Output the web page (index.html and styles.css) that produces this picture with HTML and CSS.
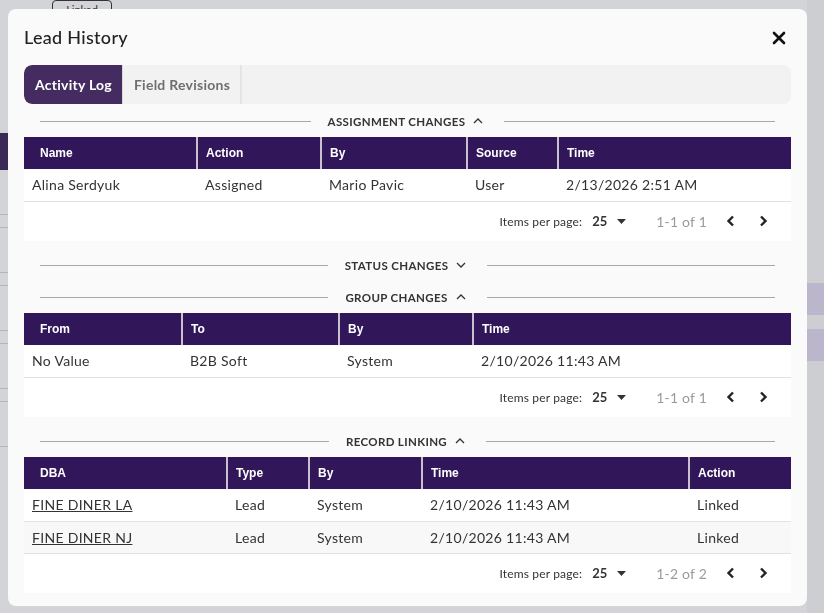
FILE: index.html
```html
<!DOCTYPE html>
<html>
<head>
<meta charset="utf-8">
<link rel="stylesheet" href="styles.css">
</head>
<body>
<div class="page">
  <div class="page-left">
    <div class="bg-linked">Linked</div>
    <div class="bg-purple"></div>
    <div class="bg-line l1"></div>
    <div class="bg-line l2"></div>
    <div class="bg-line l1"></div>
    <div class="bg-line l2"></div>
    <div class="bg-line l1"></div>
    <div class="bg-line l2"></div>
    <div class="bg-line l1"></div>
    <div class="bg-line l2"></div>
    <div class="bg-line l1"></div>
  </div>
  <div class="page-right">
    <div class="bg-lav"></div>
    <div class="bg-lav"></div>
  </div>
</div>

<div class="modal">
  <div class="modal-head">
    <h1 class="title">Lead History</h1>
    <button class="close" aria-label="close">
      <svg width="14" height="14" viewBox="0 0 14 14"><path d="M2 2 L12 12 M12 2 L2 12" stroke="#111" stroke-width="2.6" stroke-linecap="round"/></svg>
    </button>
  </div>

  <div class="tabs">
    <div class="tab active">Activity Log</div>
    <div class="tab">Field Revisions</div>
  </div>

  <div class="section first">
    <div class="sec-head">
      <span class="sec-line"></span>
      <span class="sec-title">Assignment Changes
        <svg class="chev" width="10" height="6" viewBox="0 0 10 6"><path d="M1 5 L5 1 L9 5" fill="none" stroke="#333" stroke-width="1.3"/></svg>
      </span>
      <span class="sec-line"></span>
    </div>
    <div class="card">
      <table class="grid">
        <colgroup><col style="width:173px"><col style="width:124px"><col style="width:146px"><col style="width:91px"><col></colgroup>
        <thead><tr><th>Name</th><th>Action</th><th>By</th><th>Source</th><th>Time</th></tr></thead>
        <tbody>
          <tr><td>Alina Serdyuk</td><td>Assigned</td><td>Mario Pavic</td><td>User</td><td>2/13/2026 2:51 AM</td></tr>
        </tbody>
      </table>
      <div class="pager">
        <span class="ipp">Items per page:</span>
        <span class="sel">25 <svg width="9" height="5" viewBox="0 0 9 5"><path d="M0 0 L9 0 L4.5 5 Z" fill="#333"/></svg></span>
        <span class="range">1-1 of 1</span>
        <span class="nav"><svg width="10" height="12" viewBox="0 0 10 12"><path d="M7 1.5 L2.5 6 L7 10.5" fill="none" stroke="#222" stroke-width="2.4"/></svg></span>
        <span class="nav"><svg width="10" height="12" viewBox="0 0 10 12"><path d="M3 1.5 L7.5 6 L3 10.5" fill="none" stroke="#222" stroke-width="2.4"/></svg></span>
      </div>
    </div>
  </div>

  <div class="section">
    <div class="sec-head">
      <span class="sec-line"></span>
      <span class="sec-title">Status Changes
        <svg class="chev" width="10" height="6" viewBox="0 0 10 6"><path d="M1 1 L5 5 L9 1" fill="none" stroke="#333" stroke-width="1.3"/></svg>
      </span>
      <span class="sec-line"></span>
    </div>
  </div>

  <div class="section">
    <div class="sec-head">
      <span class="sec-line"></span>
      <span class="sec-title">Group Changes
        <svg class="chev" width="10" height="6" viewBox="0 0 10 6"><path d="M1 5 L5 1 L9 5" fill="none" stroke="#333" stroke-width="1.3"/></svg>
      </span>
      <span class="sec-line"></span>
    </div>
    <div class="card">
      <table class="grid">
        <colgroup><col style="width:158px"><col style="width:157px"><col style="width:134px"><col></colgroup>
        <thead><tr><th>From</th><th>To</th><th>By</th><th>Time</th></tr></thead>
        <tbody>
          <tr><td>No Value</td><td>B2B Soft</td><td>System</td><td>2/10/2026 11:43 AM</td></tr>
        </tbody>
      </table>
      <div class="pager">
        <span class="ipp">Items per page:</span>
        <span class="sel">25 <svg width="9" height="5" viewBox="0 0 9 5"><path d="M0 0 L9 0 L4.5 5 Z" fill="#333"/></svg></span>
        <span class="range">1-1 of 1</span>
        <span class="nav"><svg width="10" height="12" viewBox="0 0 10 12"><path d="M7 1.5 L2.5 6 L7 10.5" fill="none" stroke="#222" stroke-width="2.4"/></svg></span>
        <span class="nav"><svg width="10" height="12" viewBox="0 0 10 12"><path d="M3 1.5 L7.5 6 L3 10.5" fill="none" stroke="#222" stroke-width="2.4"/></svg></span>
      </div>
    </div>
  </div>

  <div class="section">
    <div class="sec-head">
      <span class="sec-line"></span>
      <span class="sec-title">Record Linking
        <svg class="chev" width="10" height="6" viewBox="0 0 10 6"><path d="M1 5 L5 1 L9 5" fill="none" stroke="#333" stroke-width="1.3"/></svg>
      </span>
      <span class="sec-line"></span>
    </div>
    <div class="card">
      <table class="grid">
        <colgroup><col style="width:203px"><col style="width:82px"><col style="width:113px"><col style="width:267px"><col></colgroup>
        <thead><tr><th>DBA</th><th>Type</th><th>By</th><th>Time</th><th>Action</th></tr></thead>
        <tbody>
          <tr><td><a class="link" href="#">FINE DINER LA</a></td><td>Lead</td><td>System</td><td>2/10/2026 11:43 AM</td><td>Linked</td></tr>
          <tr class="alt"><td><a class="link" href="#">FINE DINER NJ</a></td><td>Lead</td><td>System</td><td>2/10/2026 11:43 AM</td><td>Linked</td></tr>
        </tbody>
      </table>
      <div class="pager">
        <span class="ipp">Items per page:</span>
        <span class="sel">25 <svg width="9" height="5" viewBox="0 0 9 5"><path d="M0 0 L9 0 L4.5 5 Z" fill="#333"/></svg></span>
        <span class="range">1-2 of 2</span>
        <span class="nav"><svg width="10" height="12" viewBox="0 0 10 12"><path d="M7 1.5 L2.5 6 L7 10.5" fill="none" stroke="#222" stroke-width="2.4"/></svg></span>
        <span class="nav"><svg width="10" height="12" viewBox="0 0 10 12"><path d="M3 1.5 L7.5 6 L3 10.5" fill="none" stroke="#222" stroke-width="2.4"/></svg></span>
      </div>
    </div>
  </div>
</div>
</body>
</html>
```

FILE: styles.css
```css
* { box-sizing: border-box; }
html, body { margin: 0; padding: 0; }
body {
  width: 824px;
  height: 613px;
  overflow: hidden;
  background: #d3d4d8;
  font-family: Lato, "Noto Sans", sans-serif;
  color: #333;
}

/* dimmed underlying page */
.page {
  display: flex;
  justify-content: space-between;
  height: 613px;
}
.page-left {
  width: 60%;
  display: flex;
  flex-direction: column;
  padding-left: 52px;
}
.bg-linked {
  width: 60px;
  height: 18px;
  margin-top: 0;
  border: 1px solid #333;
  border-radius: 4px;
  font-size: 11px;
  color: #333;
  text-align: center;
  line-height: 18px;
}
.bg-purple { height: 37px; background: #3a2a55; margin-left: -52px; margin-top: 115px; }
.bg-line { height: 1px; background: #b4b4ba; margin-left: -52px; }
.bg-line.l1 { margin-top: 44px; }
.bg-line.l2 { margin-top: 12px; }
.page-right {
  width: 17px;
  display: flex;
  flex-direction: column;
  padding-top: 283px;
  gap: 14px;
  background: #cdced2;
}
.bg-lav { height: 32px; background: #bcb6cc; }

/* modal */
.modal {
  position: fixed;
  top: 9px;
  left: 8px;
  width: 799px;
  height: 597px;
  background: #fafafa;
  border-radius: 8px;
  padding: 0 16px;
  overflow: hidden;
}
.modal-head {
  height: 56px;
  display: flex;
  align-items: center;
  justify-content: space-between;
}
.title {
  margin: 0;
  font-size: 18px;
  font-weight: 500;
  color: #222;
  letter-spacing: 0.3px;
}
.close {
  border: 0;
  background: none;
  padding: 0;
  margin-right: 5px;
  margin-top: 2px;
  width: 14px;
  height: 14px;
  display: flex;
}

.tabs {
  height: 39px;
  background: #f2f2f2;
  border-radius: 8px;
  display: flex;
  overflow: hidden;
}
.tab {
  display: flex;
  align-items: center;
  padding: 0 10px 0 11px;
  font-size: 14px;
  font-weight: 700;
  color: #6f6f6f;
  letter-spacing: 0.25px;
  border-right: 2px solid #e4e4e4;
}
.tab.active {
  background: #452c60;
  color: #fff;
  border-radius: 8px 0 0 8px;
  border-right: 1px solid #d8d8d8;
}

.section.first { margin-top: 1px; }
.sec-head {
  height: 32px;
  display: flex;
  align-items: center;
  padding: 0 16px;
  gap: 17px;
}
.sec-line {
  flex: 1;
  height: 1px;
  background: #a8a5b0;
}
.sec-title {
  font-size: 11.5px;
  font-weight: 700;
  text-transform: uppercase;
  color: #333;
  letter-spacing: 0.35px;
  display: flex;
  align-items: center;
  gap: 8px;
  padding-right: 4px;
}

.card {
  background: #fff;
  margin-bottom: 8.5px;
}
.grid {
  width: 100%;
  border-collapse: collapse;
  table-layout: fixed;
}
.grid th {
  height: 32px;
  background: #32165a;
  color: #fff;
  font-family: "Liberation Sans", Arial, sans-serif;
  font-size: 12px;
  font-weight: 700;
  text-align: left;
  padding: 0 8px;
  border-left: 2px solid #c8c2d0;
}
.grid th:first-child { border-left: 0; padding-left: 16px; }
.grid td {
  height: 32px;
  font-size: 14px;
  color: #333;
  letter-spacing: 0.3px;
  padding: 0 7px 0 8px;
  border-bottom: 1px solid #e2e2e2;
  white-space: nowrap;
}
.grid td:first-child { padding-left: 8px; }
.grid tr.alt td { background: #f8f8f8; }
.link { color: #333; text-decoration: underline; }

.pager {
  height: 39px;
  display: flex;
  align-items: center;
  justify-content: flex-end;
  padding-right: 12px;
}
.ipp { font-size: 12px; color: #333; margin-right: 10px; letter-spacing: 0.15px; }
.sel {
  display: flex;
  align-items: center;
  gap: 10px;
  font-size: 13px;
  font-weight: 700;
  color: #333;
  margin-right: 30px;
}
.range { font-size: 14px; color: #9a9a9a; margin-right: 8px; letter-spacing: 0.2px; }
.nav {
  width: 32px;
  height: 32px;
  display: flex;
  align-items: center;
  justify-content: center;
}
```
